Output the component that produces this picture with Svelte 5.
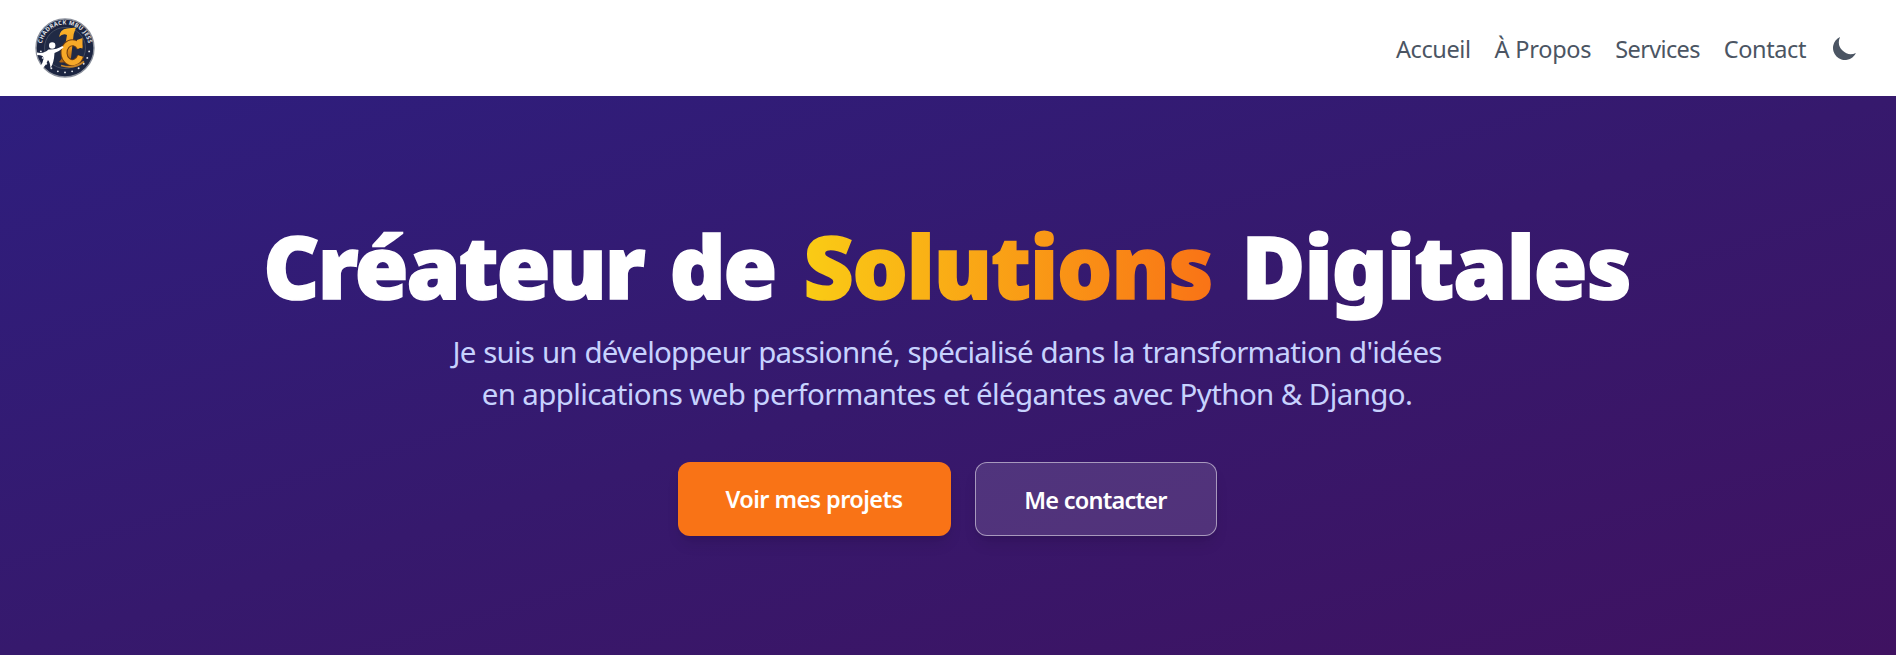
<script>
  const links = [
    { text: 'Accueil', spacing: -0.4 },
    { text: 'À Propos', spacing: -0.25 },
    { text: 'Services', spacing: -0.65 },
    { text: 'Contact', spacing: -0.4 }
  ];
  const dots = [-82, -66, -50, -34, -17, 0, 17, 34, 50, 66, 82];
</script>

<div class="page">
  <header>
    <a class="logo" href="#top" aria-label="Chadrack Mbu Jess">
      <svg width="60" height="60" viewBox="0 0 60 60">
        <defs>
          <path id="ring" d="M6.800 35 A23.7 23.7 0 1 1 53.2 35" />
          <linearGradient id="gold" x1="0" y1="0" x2="0" y2="1">
            <stop offset="0" stop-color="#f9b52b" />
            <stop offset="0.55" stop-color="#f09a1c" />
            <stop offset="1" stop-color="#a85f13" />
          </linearGradient>
        </defs>
        <circle cx="30" cy="30" r="29" fill="#1c2541" stroke="#8b909c" stroke-width="1.4" />
        <circle cx="30" cy="30" r="20.5" fill="#202a45" stroke="#4d5567" stroke-width="0.8" />
        <text class="ring-text"><textPath href="#ring" startOffset="50%" text-anchor="middle">CHADRACK MBU JESS</textPath></text>
        {#each dots as a}
          <circle cx={30 + 24.4 * Math.sin((a * Math.PI) / 180)} cy={30 + 24.4 * Math.cos((a * Math.PI) / 180)} r="0.95" fill="#e4e6eb" />
        {/each}
        <path d="M24 19 Q25 11 32 10.500 L41 9.500 Q38 16 38 22 L36 40 Q31 46 24 44 Q28 40 29 34 L32 17 Q28 15 24 19Z" fill="url(#gold)" />
        <path d="M45 32 A8.5 10 0 1 0 45.500 40" transform="translate(0 -2)" fill="none" stroke="#713e10" stroke-width="7" />
        <path d="M45 32 A8.5 10 0 1 0 45.500 40" transform="translate(0 -2)" fill="none" stroke="#f7a928" stroke-width="5" />
        <path d="M47.500 20 V30.500 L42 29 V22Z" fill="#f7a928" />
        <path d="M26 47.500 Q39 51.500 49 43.500" fill="none" stroke="#c98426" stroke-width="1.8" />
        <circle cx="17.2" cy="27.500" r="3.2" fill="#fff" />
        <path d="M2 34.500 Q9 36 13.500 31.500 Q21 32 27.500 28 L28.500 29.500 Q24 33.500 19.500 35 Q19 45 15.500 50 Q15 44 13 42 Q9 52 0.500 55.500 Q7 48 8.500 41 Q9.500 37 2 37Z" fill="#fff" />
      </svg>
    </a>
    <nav>
      {#each links as l}<a href="#top" style="letter-spacing: {l.spacing}px">{l.text}</a>{/each}
      <button class="theme" aria-label="Thème">
        <svg width="30" height="30" viewBox="0 0 20 20"><path fill="#4b5563" d="M17.293 13.293A8 8 0 016.707 2.707a8.001 8.001 0 1010.586 10.586z" /></svg>
      </button>
    </nav>
  </header>
  <main>
    <h1><span class="w1">Créateur de</span><span class="w2">Solutions</span><span class="w3">Digitales</span></h1>
    <p><span class="l1">Je suis un développeur passionné, spécialisé dans la transformation d'idées</span><span class="l2">en applications web performantes et élégantes avec Python &amp; Django.</span></p>
    <div class="actions">
      <a class="btn primary" href="#top">Voir mes projets</a>
      <a class="btn ghost" href="#top">Me contacter</a>
    </div>
  </main>
</div>

<style>
  :global(body) { background: #fff; overflow: hidden; }
  .page { width: 1896px; height: 655px; display: flex; flex-direction: column; font-family: 'Noto Sans', 'Open Sans', sans-serif; }
  a { text-decoration: none; color: inherit; }
  header { box-sizing: border-box; height: 96px; flex: none; background: #fff; display: flex; align-items: center; justify-content: space-between; padding: 0 36px 0 35px; }
  .logo { display: block; height: 60px; }
  .logo svg { display: block; }
  .ring-text { font: 700 5.8px 'Open Sans', sans-serif; fill: #e4e6eb; letter-spacing: 0.3px; }
  nav { display: flex; align-items: center; gap: 24px; font-size: 23.5px; line-height: 36px; color: #4b5563; white-space: nowrap; }
  nav a { padding-top: 2px; }
  .theme { border: 0; background: none; padding: 0; margin: 0; width: 30px; height: 30px; display: grid; place-items: center; }
  main { flex: 1; box-sizing: border-box; padding: 124px 2px 0 0; display: flex; flex-direction: column; align-items: center; background: linear-gradient(to bottom right, #2e1e7e, #36196d 50%, #3f1261); }
  h1 { margin: 0; height: 111px; line-height: 90px; font-size: 87px; font-weight: 900; color: #fff; display: flex; gap: 28px; white-space: nowrap; -webkit-text-stroke: 1.6px currentColor; }
  .w1 { letter-spacing: -2px; word-spacing: 5.5px; }
  .w2 { letter-spacing: -1.1px; color: transparent; background: linear-gradient(to right, #facc15, #f97316); background-clip: text; -webkit-background-clip: text; }
  .w3 { letter-spacing: -0.9px; margin-left: 1px; }
  p { margin: 0; font-size: 29.5px; line-height: 42px; color: #c7d2fe; display: flex; flex-direction: column; align-items: center; white-space: nowrap; }
  .l1 { letter-spacing: -0.78px; word-spacing: 0.8px; }
  .l2 { letter-spacing: -0.62px; }
  .actions { margin-top: 47px; display: flex; gap: 24px; }
  .btn { box-sizing: border-box; height: 74px; border-radius: 12px; font-size: 23.5px; font-weight: 600; color: #fff; display: flex; align-items: center; justify-content: center; white-space: nowrap; box-shadow: 0 10px 15px -3px rgba(0,0,0,.1), 0 4px 6px -4px rgba(0,0,0,.1); }
  .primary { width: 273px; background: #f97316; letter-spacing: -0.58px; }
  .ghost { width: 242px; padding-top: 2px; background: rgba(255,255,255,.12); border: 1px solid rgba(255,255,255,.5); letter-spacing: -0.74px; }
</style>
